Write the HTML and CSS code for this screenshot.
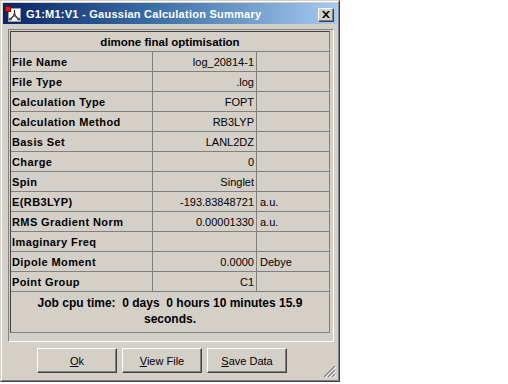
FILE: index.html
```html
<!DOCTYPE html>
<html>
<head>
<meta charset="utf-8">
<link rel="stylesheet" href="styles.css">
</head>
<body>
<div class="window">
  <div class="frame">
    <div class="titlebar">
      <svg class="appicon" width="16" height="16" viewBox="0 0 16 16">
        <rect x="3.5" y="2.5" width="12" height="13" fill="#ffffff" stroke="#9a9a9a"/>
        <line x1="9.5" y1="4" x2="9.5" y2="9" stroke="#303030" stroke-width="1.3"/>
        <line x1="9.5" y1="9" x2="5.5" y2="13" stroke="#303030" stroke-width="1.3"/>
        <line x1="9.5" y1="9" x2="13.5" y2="13" stroke="#303030" stroke-width="1.3"/>
        <circle cx="9.5" cy="9" r="1.4" fill="#505050"/>
        <circle cx="5.3" cy="13.2" r="1.4" fill="#505050"/>
        <circle cx="13.7" cy="13.2" r="1.4" fill="#505050"/>
        <rect x="0.5" y="0.5" width="5" height="5" fill="#e01818" stroke="#900000"/>
      </svg>
      <span class="title">G1:M1:V1 - Gaussian Calculation Summary</span>
      <div class="close">
        <svg width="8" height="7" viewBox="0 0 8 7">
          <path d="M0 0h2l2 2.2 2-2.2h2L5 3.5 8 7H6L4 4.8 2 7H0l3-3.5z" fill="#000"/>
        </svg>
      </div>
    </div>
    <div class="body">
      <div class="panel">
        <div class="tablebox">
          <div class="grid">
            <div class="head">dimone final optimisation</div>
            <div class="lbl">File Name</div><div class="val">log_20814-1</div><div class="unit"></div>
            <div class="lbl">File Type</div><div class="val">.log</div><div class="unit"></div>
            <div class="lbl">Calculation Type</div><div class="val">FOPT</div><div class="unit"></div>
            <div class="lbl">Calculation Method</div><div class="val">RB3LYP</div><div class="unit"></div>
            <div class="lbl">Basis Set</div><div class="val">LANL2DZ</div><div class="unit"></div>
            <div class="lbl">Charge</div><div class="val">0</div><div class="unit"></div>
            <div class="lbl">Spin</div><div class="val">Singlet</div><div class="unit"></div>
            <div class="lbl">E(RB3LYP)</div><div class="val">-193.83848721</div><div class="unit">a.u.</div>
            <div class="lbl">RMS Gradient Norm</div><div class="val">0.00001330</div><div class="unit">a.u.</div>
            <div class="lbl">Imaginary Freq</div><div class="val"></div><div class="unit"></div>
            <div class="lbl">Dipole Moment</div><div class="val">0.0000</div><div class="unit">Debye</div>
            <div class="lbl">Point Group</div><div class="val">C1</div><div class="unit"></div>
          </div>
          <div class="cpu">Job cpu time:&nbsp; 0 days&nbsp; 0 hours 10 minutes 15.9 seconds.</div>
        </div>
      </div>
      <div class="buttons">
        <div class="btn"><span><u>O</u>k</span></div>
        <div class="btn"><span><u>V</u>iew File</span></div>
        <div class="btn"><span><u>S</u>ave Data</span></div>
      </div>
      <div class="grip">
        <svg width="12" height="12" viewBox="0 0 12 12">
          <path d="M11 0L0 11M11 4L4 11M11 8L8 11" stroke="#808080" stroke-width="1.2"/>
          <path d="M12 1L1 12M12 5L5 12M12 9L9 12" stroke="#ffffff" stroke-width="1"/>
        </svg>
      </div>
    </div>
  </div>
</div>
</body>
</html>
```
FILE: styles.css
```css
* { box-sizing: border-box; }
body {
  margin: 0;
  background: #ffffff;
  font-family: "Liberation Sans", Arial, sans-serif;
  font-size: 11px;
  color: #000;
}
.window {
  width: 340px;
  height: 382px;
  border: 1px solid;
  border-color: #d4d0c8 #404040 #404040 #d4d0c8;
  background: #d4d0c8;
}
.frame {
  height: 100%;
  border: 1px solid;
  border-color: #ffffff #808080 #808080 #ffffff;
  padding: 1px;
  display: flex;
  flex-direction: column;
}
.titlebar {
  height: 21px;
  flex: none;
  background: linear-gradient(to right, #0a246a 0%, #3a6ea5 45%, #a6caf0 100%);
  display: flex;
  align-items: center;
  padding: 0 3px 0 2px;
}
.appicon { flex: none; }
.title {
  margin-left: 5px;
  color: #fff;
  font-weight: bold;
  font-size: 11px;
  letter-spacing: 0.25px;
  flex: 1;
  white-space: nowrap;
}
.close {
  width: 16px;
  height: 14px;
  background: #d4d0c8;
  border: 1px solid;
  border-color: #ffffff #404040 #404040 #ffffff;
  box-shadow: inset -1px -1px 0 #808080;
  display: flex;
  align-items: center;
  justify-content: center;
  padding-bottom: 1px;
  margin-top: 2px;
}
.body {
  flex: 1;
  position: relative;
  padding: 5px 4px 0 5px;
}
.panel {
  width: 326px;
  border: 1px solid;
  border-color: #808080 #ffffff #ffffff #808080;
  padding: 1px 2px 8px 1px;
}
.tablebox {
  width: 320px;
  border: 1px solid;
  border-color: #404040 #808080 #808080 #404040;
  background: #d4d0c8;
}
.grid {
  display: grid;
  grid-template-columns: 142px 104px 1fr;
  grid-auto-rows: 20px;
}
.grid > div {
  border-bottom: 1px solid #808080;
  display: flex;
  align-items: center;
  white-space: nowrap;
}
.head {
  grid-column: 1 / 4;
  justify-content: center;
  font-weight: bold;
  font-size: 11.5px;
}
.lbl {
  border-right: 1px solid #808080;
  padding-left: 1px;
  font-weight: bold;
  letter-spacing: 0.4px;
}
.val {
  border-right: 1px solid #808080;
  justify-content: flex-end;
  padding-right: 2px;
}
.unit {
  padding-left: 3px;
}
.cpu {
  height: 40px;
  padding: 3px 22px 0 22px;
  text-align: center;
  font-weight: bold;
  font-size: 12px;
  line-height: 16px;
}
.buttons {
  display: flex;
  gap: 5px;
  margin: 6px 0 0 29px;
}
.btn {
  width: 80px;
  height: 25px;
  border: 1px solid;
  border-color: #ffffff #404040 #404040 #ffffff;
  box-shadow: inset -1px -1px 0 #808080;
  display: flex;
  align-items: center;
  justify-content: center;
}
.grip {
  position: absolute;
  right: 1px;
  bottom: 1px;
  width: 12px;
  height: 12px;
  display: flex;
}
```
